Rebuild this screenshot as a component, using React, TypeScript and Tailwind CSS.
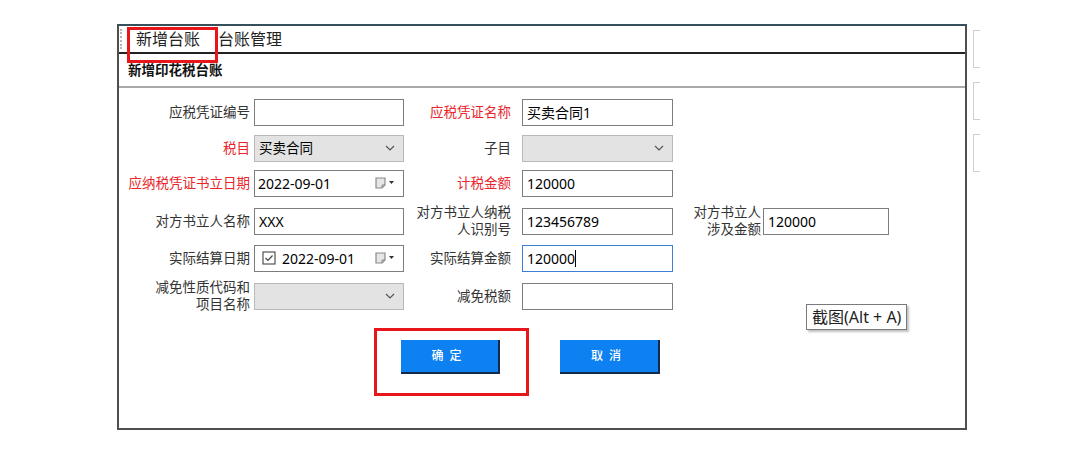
import type { ReactNode } from "react";

const cjk = { fontFamily: '"Noto Sans", "Noto Sans CJK SC", sans-serif' };

function Label({ children, red, pr }: { children: ReactNode; red?: boolean; pr: string }) {
  return (
    <div className={`text-right text-[13.5px] leading-[17px] ${pr} ${red ? "text-[#e8262b]" : "text-[#333]"}`}>
      {children}
    </div>
  );
}

function TextBox({ value, focused, cursor }: { value?: string; focused?: boolean; cursor?: boolean }) {
  return (
    <div
      className={`flex items-center h-[27px] px-[4px] bg-white text-[14px] text-black border ${
        focused ? "border-[#3a7fd5]" : "border-[#7d7d7d]"
      }`}
    >
      <span>{value}</span>
      {cursor && <span className="w-px h-[17px] bg-black" />}
    </div>
  );
}

function Chevron() {
  return (
    <svg width="10" height="6" viewBox="0 0 10 6" className="ml-auto mr-[4px]">
      <path d="M1 1l4 4 4-4" fill="none" stroke="#555" strokeWidth="1.2" />
    </svg>
  );
}

function Combo({ value }: { value?: string }) {
  return (
    <div className="flex items-center h-[27px] px-[4px] bg-[#e3e3e3] border border-[#b9b9b9] text-[13.5px] text-black">
      <span>{value}</span>
      <Chevron />
    </div>
  );
}

function CalIcon() {
  return (
    <svg width="22" height="12" viewBox="0 0 22 12" className="ml-auto">
      <path d="M1 1h9v7l-3 3H1z" fill="#e6e6e6" stroke="#8a8a8a" strokeWidth="1.2" />
      <path d="M7 11V8h3" fill="none" stroke="#8a8a8a" strokeWidth="1" />
      <path d="M14 4h5l-2.5 3z" fill="#333" />
    </svg>
  );
}

function DateBox({ value, check }: { value: string; check?: boolean }) {
  return (
    <div className="flex items-center h-[27px] pl-[3px] pr-[6px] bg-white border border-[#7d7d7d] text-[14px] text-black">
      {check && (
        <svg width="14" height="14" viewBox="0 0 14 14" className="ml-[4px] mr-[6px]">
          <rect x="1" y="1" width="12" height="12" fill="none" stroke="#444" strokeWidth="1.1" />
          <path d="M3.5 7l2.5 2.5 4.5-5" fill="none" stroke="#444" strokeWidth="1.2" />
        </svg>
      )}
      <span>{value}</span>
      <CalIcon />
    </div>
  );
}

function Bracket() {
  return <div className="w-[7px] h-[38px] border-l border-t border-b border-[#cfcfcf]" />;
}

export default function App() {
  return (
    <div className="w-[1080px] h-[456px] bg-white pt-[24px] pl-[117px] flex flex-row" style={cjk}>
      {/* main window */}
      <div className="relative w-[850px] h-[406px] border-2 border-[#4f4f4f] border-t-[#35505a] flex flex-col">
        {/* tab strip */}
        <div className="flex flex-row items-center h-[28px] border-b-2 border-[#222]">
          <div className="w-[2px] h-[20px] ml-[1px] border-l-2 border-dotted border-[#b5b5b5]" />
          <div className="ml-[14px] text-[16px] text-[#222] leading-none">新增台账</div>
          <div className="ml-[18px] text-[16px] text-[#222] leading-none">台账管理</div>
        </div>
        {/* title */}
        <div className="h-[34px] flex items-center pl-[9px] text-[13.5px] font-bold text-[#111] border-b-2 border-[#a9a9a9]">
          新增印花税台账
        </div>

        {/* form */}
        <div className="mt-[6px] grid grid-cols-[135px_150px_118px_151px_90px_126px] grid-rows-[36px_36px_34px_42px_32px_44px] items-center">
          <Label pr="pr-[4px]">应税凭证编号</Label>
          <TextBox />
          <Label red pr="pr-[11px]">应税凭证名称</Label>
          <TextBox value="买卖合同1" />
          <div />
          <div />

          <Label red pr="pr-[4px]">税目</Label>
          <Combo value="买卖合同" />
          <Label pr="pr-[11px]">子目</Label>
          <Combo />
          <div />
          <div />

          <Label red pr="pr-[4px]">应纳税凭证书立日期</Label>
          <DateBox value="2022-09-01" />
          <Label red pr="pr-[11px]">计税金额</Label>
          <TextBox value="120000" />
          <div />
          <div />

          <Label pr="pr-[4px]">对方书立人名称</Label>
          <TextBox value="XXX" />
          <Label pr="pr-[11px]">
            对方书立人纳税
            <br />
            人识别号
          </Label>
          <TextBox value="123456789" />
          <Label pr="pr-[2px]">
            对方书立人
            <br />
            涉及金额
          </Label>
          <TextBox value="120000" />

          <Label pr="pr-[4px]">实际结算日期</Label>
          <DateBox value="2022-09-01" check />
          <Label pr="pr-[11px]">实际结算金额</Label>
          <TextBox value="120000" focused cursor />
          <div />
          <div />

          <Label pr="pr-[4px]">
            减免性质代码和
            <br />
            项目名称
          </Label>
          <Combo />
          <Label pr="pr-[11px]">减免税额</Label>
          <TextBox />
          <div />
          <div />
        </div>

        {/* buttons */}
        <div className="mt-[22px] ml-[282px] flex flex-row gap-[60px]">
          <button className="w-[99px] h-[34px] bg-[#0d80f2] border-r-2 border-b-2 border-[#15294d] text-white text-[12px] font-medium tracking-[6px]">
            确定
          </button>
          <button className="w-[100px] h-[34px] bg-[#0d80f2] border-r-2 border-b-2 border-[#15294d] text-white text-[12px] font-medium tracking-[6px]">
            取消
          </button>
        </div>

        {/* tooltip */}
        <div className="absolute left-[687px] top-[278px] px-[5px] h-[26px] flex items-center bg-white border border-[#7a7a7a] shadow-[2px_2px_2px_rgba(0,0,0,0.25)] text-[16px] text-[#222]">
          截图(Alt + A)
        </div>

        {/* red annotation boxes */}
        <div className="absolute left-[8px] top-[1px] w-[91px] h-[36px] border-[3px] border-[#e8151b]" />
        <div className="absolute left-[255px] top-[302px] w-[155px] h-[68px] border-[3px] border-[#e8151b]" />
      </div>

      {/* side brackets */}
      <div className="ml-[6px] mt-[6px] flex flex-col gap-[14px]">
        <Bracket />
        <Bracket />
        <Bracket />
      </div>
    </div>
  );
}
